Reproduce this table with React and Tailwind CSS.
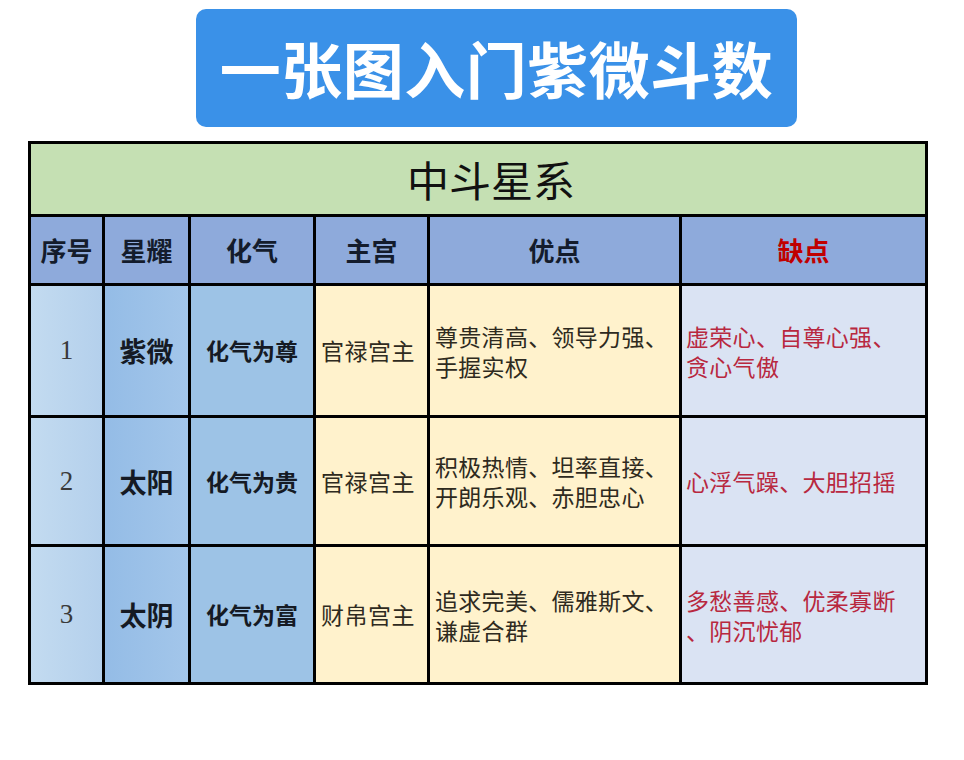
const rows = [
  {
    no: '1',
    star: '紫微',
    qi: '化气为尊',
    palace: '官禄宫主',
    pros: ['尊贵清高、领导力强、', '手握实权'],
    cons: ['虚荣心、自尊心强、', '贪心气傲'],
    h: 'h-[129px]',
  },
  {
    no: '2',
    star: '太阳',
    qi: '化气为贵',
    palace: '官禄宫主',
    pros: ['积极热情、坦率直接、', '开朗乐观、赤胆忠心'],
    cons: ['心浮气躁、大胆招摇'],
    h: 'h-[126px]',
  },
  {
    no: '3',
    star: '太阴',
    qi: '化气为富',
    palace: '财帛宫主',
    pros: ['追求完美、儒雅斯文、', '谦虚合群'],
    cons: ['多愁善感、优柔寡断', '、阴沉忧郁'],
    h: 'h-[135px]',
  },
];

const headers = ['序号', '星耀', '化气', '主宫', '优点', '缺点'];

export default function App() {
  return (
    <div
      className="w-[964px] h-[760px] bg-white overflow-hidden pt-[9px]"
      style={{ fontFamily: '"Noto Sans CJK SC", "Liberation Sans", sans-serif' }}
    >
      {/* Banner */}
      <div className="ml-[196px] w-[601px] h-[118px] rounded-[10px] bg-[#3a91e8] flex items-center justify-center">
        <h1 className="text-white text-[61px] font-bold leading-none tracking-[0.5px] pb-[2px]">
          一张图入门紫微斗数
        </h1>
      </div>

      {/* Table */}
      <div className="ml-[28px] mt-[14px] w-[900px] bg-black p-[3px] grid grid-cols-[71px_83px_122px_111px_249px_243px] gap-[3px]">
        <div className="col-span-6 h-[70px] bg-[#c5e0b3] flex items-center justify-center pl-[26px]">
          <span className="text-[42px] text-[#111] leading-none">中斗星系</span>
        </div>

        {headers.map((t, i) => (
          <div
            key={t}
            className="h-[66px] bg-[#8eaadb] flex items-center justify-center"
          >
            <span
              className={`text-[26px] font-semibold leading-none ${
                i === 5 ? 'text-[#c00000]' : 'text-[#141c2c]'
              }`}
            >
              {t}
            </span>
          </div>
        ))}

        {rows.map((r) => (
          <div key={r.no} className="contents">
            <div className={`${r.h} bg-gradient-to-r from-[#c3dbf0] to-[#b4d0ec] flex items-center justify-center`}>
              <span
                className="text-[27px] text-[#3a3a3a] leading-none"
                style={{ fontFamily: '"Liberation Serif", serif' }}
              >
                {r.no}
              </span>
            </div>
            <div className={`${r.h} bg-gradient-to-r from-[#94bce6] to-[#a3c6ea] flex items-center justify-center`}>
              <span className="text-[27px] font-bold text-[#151a24] leading-none">{r.star}</span>
            </div>
            <div className={`${r.h} bg-[#9dc3e6] flex items-center justify-center`}>
              <span className="text-[23px] font-bold text-[#151a24] leading-none">{r.qi}</span>
            </div>
            <div className={`${r.h} bg-[#fff2cc] flex items-center pl-[5px]`}>
              <span className="text-[23px] text-[#2e2a20] leading-none tracking-[0.5px]">{r.palace}</span>
            </div>
            <div className={`${r.h} bg-[#fff2cc] flex items-center pl-[5px]`}>
              <div className="text-[23px] text-[#2e2a20] leading-[30px] whitespace-nowrap tracking-[0.3px]">
                {r.pros.map((l) => (
                  <div key={l}>{l}</div>
                ))}
              </div>
            </div>
            <div className={`${r.h} bg-[#dae3f3] flex items-center pl-[4px]`}>
              <div className="text-[23px] text-[#b8283f] leading-[30px] whitespace-nowrap tracking-[0.3px]">
                {r.cons.map((l) => (
                  <div key={l}>{l}</div>
                ))}
              </div>
            </div>
          </div>
        ))}
      </div>
    </div>
  );
}
